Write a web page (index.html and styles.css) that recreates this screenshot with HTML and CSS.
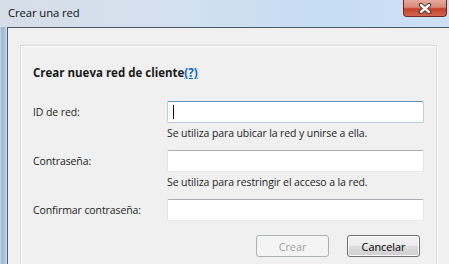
FILE: index.html
```html
<!DOCTYPE html>
<html>
  <head>
    <title>Crear una red</title>
    <link rel="stylesheet" href="styles.css">
  </head>
  <body>
    <div class="window">
      <!-- Title bar -->
      <div class="titlebar">
        <span class="title">Crear una red</span>
        <button class="close-button" aria-label="Cerrar">
          <svg width="14" height="11" viewBox="0 0 14 11">
            <path d="M3 2 L11 9 M11 2 L3 9" stroke="#3b2622" stroke-width="4.2" stroke-linecap="round" fill="none"/>
            <path d="M3 2 L11 9 M11 2 L3 9" stroke="#ffffff" stroke-width="2.4" stroke-linecap="round" fill="none"/>
          </svg>
        </button>
      </div>

      <div class="window-body">
        <div class="frame-left"></div>
        <div class="client">
          <div class="panel">
            <h1 class="panel-title">Crear nueva red de cliente<a href="#">(?)</a></h1>

            <div class="form-grid">
              <label class="field-label">ID de red:</label>
              <div class="field">
                <div class="textbox focused"><span class="caret"></span></div>
                <div class="hint">Se utiliza para ubicar la red y unirse a ella.</div>
              </div>

              <label class="field-label">Contraseña:</label>
              <div class="field">
                <div class="textbox"></div>
                <div class="hint">Se utiliza para restringir el acceso a la red.</div>
              </div>

              <label class="field-label">Confirmar contraseña:</label>
              <div class="field">
                <div class="textbox"></div>
              </div>
            </div>

            <div class="actions">
              <button class="button" disabled>Crear</button>
              <button class="button">Cancelar</button>
            </div>
          </div>
        </div>
      </div>
    </div>
  </body>
</html>
```

FILE: styles.css
```css
body {
  margin: 0;
  padding: 0;
  overflow: hidden;
  font-family: "Open Sans", "Noto Sans", Arial, sans-serif;
  font-size: 10.5px;
  letter-spacing: -0.1px;
  color: #000;
}
.window {
  width: 449px;
  height: 264px;
  display: flex;
  flex-direction: column;
  overflow: hidden;
}
.titlebar {
  height: 27px;
  flex-shrink: 0;
  display: flex;
  align-items: flex-start;
  justify-content: space-between;
  background: linear-gradient(90deg, #d6dee8 0%, #d3e0ee 40%, #c6dcf3 70%, #cce1f6 100%);
}
.title {
  margin: 5px 0 0 8px;
  font-size: 11.3px;
  line-height: 16px;
  color: #111;
}
.close-button {
  width: 44px;
  height: 17px;
  margin-right: 2px;
  padding: 0;
  border: 1px solid #6e2a22;
  border-top: none;
  border-radius: 0 0 4px 4px;
  background: linear-gradient(180deg, #e6aa9c 0%, #d88a78 45%, #c4402a 55%, #d0654f 100%);
  display: flex;
  align-items: center;
  justify-content: center;
}
.window-body {
  flex: 1;
  display: flex;
}
.frame-left {
  width: 7px;
  background: linear-gradient(90deg, #c9d3dd 0%, #9fb6cf 30%, #a9c4e2 70%, #d2e4f6 100%);
}
.client {
  flex: 1;
  background-color: #f0f0f0;
  border-top: 1px solid #4e5966;
  border-left: 1px solid #4e5966;
  padding: 17px 0 0 12px;
}
.panel {
  width: 391px;
  height: 240px;
  padding: 19px 12px 0 12px;
  border: 1px solid #d5d9dd;
  box-shadow: inset 1px 1px 0 #ffffff, 1px 1px 0 #ffffff;
}
.panel-title {
  margin: 0 0 20px 0;
  font-size: 11.5px;
  letter-spacing: 0;
  line-height: 16px;
  font-weight: bold;
  color: #1a1a1a;
}
.panel-title a {
  color: #0066cc;
  text-decoration: underline;
}
.form-grid {
  display: grid;
  grid-template-columns: 134px 257px;
  align-items: start;
}
.field-label {
  line-height: 22px;
  color: #1e1e1e;
}
.field {
  display: flex;
  flex-direction: column;
}
.textbox {
  height: 20px;
  border: 1px solid #e2e3ea;
  border-top-color: #abadb3;
  border-bottom-color: #e3e9ef;
  border-radius: 2px;
  background-color: #fff;
  display: flex;
  align-items: center;
}
.textbox.focused {
  border-color: #b5cfe7;
  border-top-color: #5794bf;
}
.caret {
  width: 1px;
  height: 14px;
  margin-left: 5px;
  background-color: #000;
}
.hint {
  margin: 3px 0 9px 0;
  line-height: 15px;
  color: #1e1e1e;
}
.actions {
  display: flex;
  justify-content: flex-end;
  gap: 18px;
  margin: 14px 4px 0 0;
}
.button {
  width: 73px;
  height: 22px;
  padding: 0;
  font-family: inherit;
  font-size: 10.8px;
  color: #000;
  border: 1px solid #707070;
  border-radius: 3px;
  background: linear-gradient(180deg, #f2f2f2 0%, #ebebeb 50%, #dddddd 51%, #cfcfcf 100%);
  box-shadow: inset 0 0 0 1px #fcfcfc;
}
.button:disabled {
  color: #a0a0a0;
  border-color: #adb2b5;
  background: #f4f4f4;
  box-shadow: none;
}
```
